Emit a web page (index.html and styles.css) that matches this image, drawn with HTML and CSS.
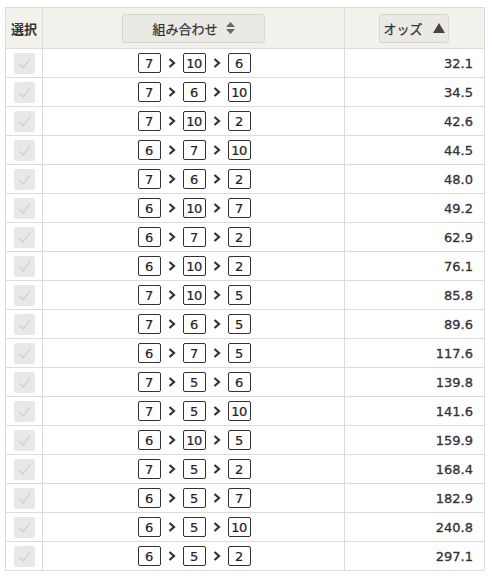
FILE: index.html
```html
<!DOCTYPE html>
<html lang="ja">
<head>
<meta charset="utf-8">
<link rel="stylesheet" href="styles.css">
</head>
<body>
<div class="wrap">
<table class="odds">
<thead>
<tr>
<th class="c-sel">選択</th>
<th class="c-combo"><span class="btn btn-combo">組み合わせ <svg class="sort" width="9" height="12" viewBox="0 0 9 12"><path d="M4.5 0L9 5H0Z M4.5 12L0 7H9Z" fill="#666"/></svg></span></th>
<th class="c-odds"><span class="btn btn-odds">オッズ <svg class="tri" width="12" height="10" viewBox="0 0 12 10"><path d="M6 0L12 10H0Z" fill="#444"/></svg></span></th>
</tr>
</thead>
<tbody id="rows"></tbody>
</table>
</div>
<script src="app.js"></script>
</body>
</html>
```
FILE: app.js
```js
const data = [
  [7,10,6,"32.1"],[7,6,10,"34.5"],[7,10,2,"42.6"],[6,7,10,"44.5"],
  [7,6,2,"48.0"],[6,10,7,"49.2"],[6,7,2,"62.9"],[6,10,2,"76.1"],
  [7,10,5,"85.8"],[7,6,5,"89.6"],[6,7,5,"117.6"],[7,5,6,"139.8"],
  [7,5,10,"141.6"],[6,10,5,"159.9"],[7,5,2,"168.4"],[6,5,7,"182.9"],
  [6,5,10,"240.8"],[6,5,2,"297.1"]
];
const chk = '<span class="chk"><svg width="21" height="21" viewBox="0 0 21 21"><path d="M5 11L9 15L16 6" fill="none" stroke="#d2d2d2" stroke-width="1.3"/></svg></span>';
const arr = '<svg class="arr" width="8" height="10" viewBox="0 0 8 10"><path d="M1.5 1L6 5L1.5 9" fill="none" stroke="#333" stroke-width="2.2"/></svg>';
const tb = document.getElementById('rows');
tb.innerHTML = data.map(d =>
  `<tr><td class="c-sel">${chk}</td><td class="c-combo"><div class="combo"><span class="num">${d[0]}</span>${arr}<span class="num">${d[1]}</span>${arr}<span class="num">${d[2]}</span></div></td><td class="c-odds">${d[3]}</td></tr>`
).join('');
```
FILE: styles.css
```css
html, body { margin: 0; padding: 0; background: #fff; }
body {
  font-family: "DejaVu Sans", "Noto Sans CJK JP", sans-serif;
  color: #333;
}
.wrap { padding: 7px 0 0 5px; }
.odds {
  border-collapse: collapse;
  width: 480px;
  table-layout: fixed;
}
.odds th, .odds td {
  border: 1px solid #dcdcdc;
  padding: 0;
}
.odds th {
  background: #f3f1ec;
  height: 40px;
  font-family: "Noto Sans CJK JP", sans-serif;
  font-weight: bold;
  font-size: 13px;
  color: #333;
}
.odds td { height: 28px; }
.c-sel { width: 36px; text-align: center; }
.c-combo { width: 301px; text-align: center; }
.c-odds { text-align: right; }
th.c-odds { text-align: center; }
td.c-odds {
  padding-right: 11px;
  font-size: 13px;
  -webkit-text-stroke: 0.3px #333;
}
.btn {
  display: inline-flex;
  align-items: center;
  justify-content: center;
  gap: 8px;
  height: 27px;
  background: #ebe9e3;
  border: 1px solid #d8d5ce;
  border-radius: 3px;
  vertical-align: middle;
  font-weight: normal;
  -webkit-text-stroke: 0.25px #333;
}
.btn-combo { width: 141px; }
.btn-odds { width: 68px; gap: 10px; margin-right: 1px; }
.chk {
  display: inline-block;
  width: 21px;
  height: 21px;
  background: #e8e8e8;
  border-radius: 2px;
  vertical-align: middle;
  margin-left: 1px;
}
.chk svg { display: block; }
.combo {
  display: flex;
  justify-content: center;
  align-items: center;
  gap: 7px;
  padding-left: 1px;
}
.num {
  box-sizing: border-box;
  width: 23px;
  height: 20px;
  border: 1px solid #333;
  border-radius: 2px;
  display: flex;
  align-items: center;
  justify-content: center;
  font-size: 13px;
  color: #222;
  letter-spacing: -0.5px;
  -webkit-text-stroke: 0.2px #222;
}
.arr { display: block; }
```
